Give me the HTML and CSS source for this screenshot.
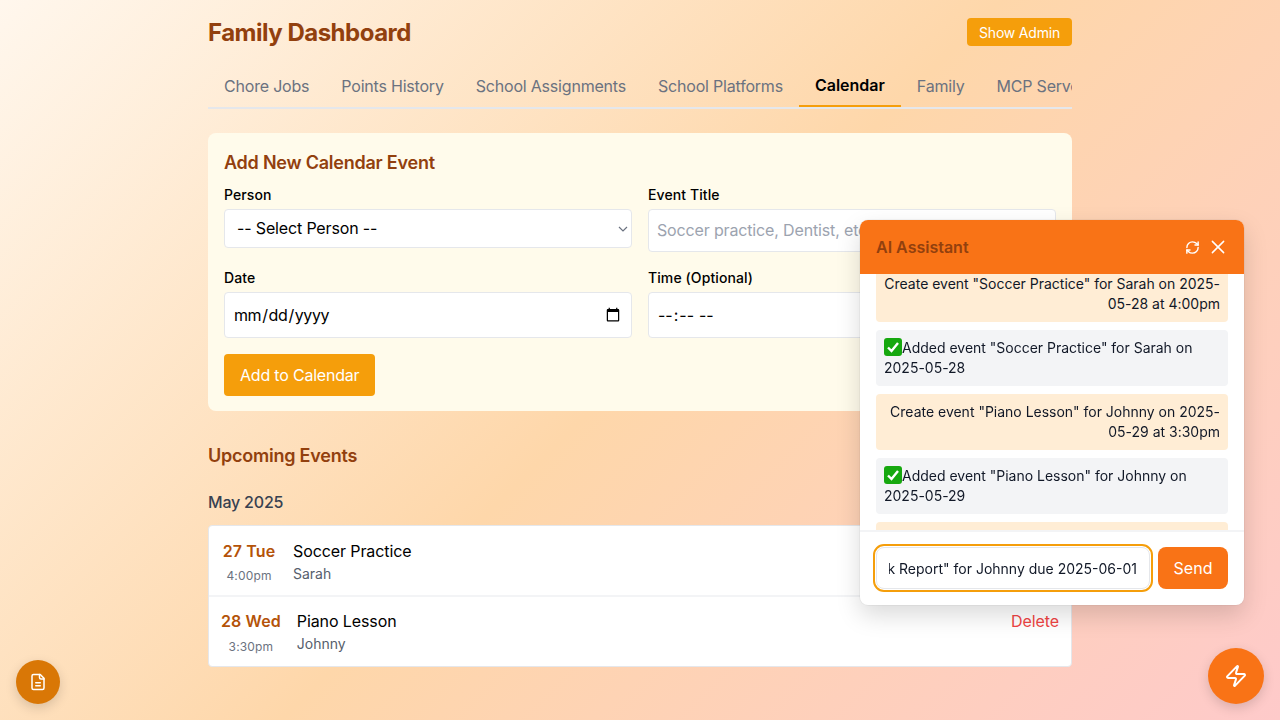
FILE: index.html

```html
<!DOCTYPE html>
<html lang="en">
<head>
<meta charset="UTF-8">
<title>Family Dashboard</title>
<meta name="viewport" content="width=device-width, initial-scale=1">
<link rel="stylesheet" href="styles.css">
</head>
<body>

<main class="page">
  <header class="top">
    <h1>Family Dashboard</h1>
    <button class="btn-admin">Show Admin</button>
  </header>

  <nav class="tabs">
    <a class="tab">Chore Jobs</a>
    <a class="tab">Points History</a>
    <a class="tab">School Assignments</a>
    <a class="tab">School Platforms</a>
    <a class="tab active">Calendar</a>
    <a class="tab">Family</a>
    <a class="tab">MCP Servers</a>
  </nav>

  <section class="form-card">
    <h3>Add New Calendar Event</h3>
    <div class="form-grid">
      <div class="field">
        <label>Person</label>
        <select class="control select-control">
          <option>-- Select Person --</option>
        </select>
      </div>
      <div class="field">
        <label>Event Title</label>
        <input class="control title-control" type="text" placeholder="Soccer practice, Dentist, etc.">
      </div>
      <div class="field">
        <label>Date</label>
        <input class="control date-control" type="date">
      </div>
      <div class="field">
        <label>Time (Optional)</label>
        <input class="control time-control" type="time">
      </div>
    </div>
    <button class="btn-add">Add to Calendar</button>
  </section>

  <h2 class="upcoming">Upcoming Events</h2>
  <h4 class="month">May 2025</h4>

  <div class="events">
    <div class="event">
      <div class="when">
        <div class="day">27 Tue</div>
        <div class="time">4:00pm</div>
      </div>
      <div class="what">
        <div class="name">Soccer Practice</div>
        <div class="who">Sarah</div>
      </div>
      <a class="delete">Delete</a>
    </div>
    <div class="event">
      <div class="when">
        <div class="day">28 Wed</div>
        <div class="time">3:30pm</div>
      </div>
      <div class="what">
        <div class="name">Piano Lesson</div>
        <div class="who">Johnny</div>
      </div>
      <a class="delete">Delete</a>
    </div>
  </div>
</main>

<aside class="chat">
  <div class="chat-head">
    <span class="chat-title">AI Assistant</span>
    <div class="chat-icons">
      <svg width="15" height="15" viewBox="0 0 24 24" fill="none" stroke="currentColor" stroke-width="2.3" stroke-linecap="round" stroke-linejoin="round"><path d="M3 12a9 9 0 0 1 9-9 9.75 9.75 0 0 1 6.74 2.74L21 8"/><path d="M21 3v5h-5"/><path d="M21 12a9 9 0 0 1-9 9 9.75 9.75 0 0 1-6.74-2.74L3 16"/><path d="M8 16H3v5"/></svg>
      <svg width="18" height="18" viewBox="0 0 24 24" fill="none" stroke="currentColor" stroke-width="2" stroke-linecap="round" stroke-linejoin="round"><path d="M4.5 4.5l15 15"/><path d="M19.5 4.5l-15 15"/></svg>
    </div>
  </div>
  <div class="messages">
    <div class="msg user first">Create event "Soccer Practice" for Sarah on 2025-05-28 at 4:00pm</div>
    <div class="msg bot"><svg class="check" viewBox="0 0 18 18"><rect width="18" height="18" rx="3" fill="#16a80f"/><path d="M4 9.5l3.5 3.5L14 5" fill="none" stroke="#fff" stroke-width="2.4"/></svg>Added event "Soccer Practice" for Sarah on 2025-05-28</div>
    <div class="msg user">Create event "Piano Lesson" for Johnny on 2025-05-29 at 3:30pm</div>
    <div class="msg bot"><svg class="check" viewBox="0 0 18 18"><rect width="18" height="18" rx="3" fill="#16a80f"/><path d="M4 9.5l3.5 3.5L14 5" fill="none" stroke="#fff" stroke-width="2.4"/></svg>Added event "Piano Lesson" for Johnny on 2025-05-29</div>
    <div class="msg user">Add assignment "Book Report" for Johnny due 2025-06-01</div>
  </div>
  <div class="chat-foot">
    <div class="chat-input"><div class="chat-text"><span>Add assignment "Book Report" for Johnny due 2025-06-01</span></div></div>
    <button class="btn-send">Send</button>
  </div>
</aside>

<button class="fab fab-notes">
  <svg width="18" height="18" viewBox="0 0 24 24" fill="none" stroke="currentColor" stroke-width="2" stroke-linecap="round" stroke-linejoin="round"><path d="M15 2H6a2 2 0 0 0-2 2v16a2 2 0 0 0 2 2h12a2 2 0 0 0 2-2V7Z"/><path d="M14 2v4a2 2 0 0 0 2 2h4"/><path d="M9 13h6"/><path d="M9 17h6"/></svg>
</button>
<button class="fab fab-chat">
  <svg width="24" height="24" viewBox="0 0 24 24" fill="none" stroke="currentColor" stroke-width="2" stroke-linecap="round" stroke-linejoin="round"><path d="M4 14a1 1 0 0 1-.78-1.63l9.9-10.2a.5.5 0 0 1 .86.46l-1.92 6.02A1 1 0 0 0 13 10h7a1 1 0 0 1 .78 1.63l-9.9 10.2a.5.5 0 0 1-.86-.46l1.92-6.02A1 1 0 0 0 11 14z"/></svg>
</button>

</body>
</html>
```

FILE: styles.css

```css
* { box-sizing: border-box; }
html, body { height: 100%; }
body { margin: 0; height: 720px; overflow: hidden; font-family: Inter, 'Liberation Sans', sans-serif; color: #000; background: linear-gradient(135deg, #fff7ed 0%, #fed7aa 50%, #fecaca 100%); }

.page { width: 864px; margin: 0 auto; padding-top: 16px; }

.top { display: flex; justify-content: space-between; align-items: flex-start; height: 34px; margin-bottom: 16px; }
.top h1 { margin: 0; font-size: 24px; line-height: 34px; font-weight: 700; letter-spacing: -.5px; color: #92400e; }
.btn-admin { margin-top: 2px; height: 28px; padding: 0 12px; border: none; border-radius: 4px; background: #f59e0b; color: #fff; font: 400 14px Inter, sans-serif; letter-spacing: -.2px; }

.tabs { display: flex; height: 43px; overflow: hidden; border-bottom: 2px solid #e5e7eb; }
.tab { flex: none; height: 41px; padding: 0 16px; line-height: 40px; font-size: 16px; letter-spacing: -.2px; color: #6b7280; }
.tab.active { color: #000; font-weight: 600; letter-spacing: 0; line-height: 38px; border-bottom: 2px solid #f59e0b; }

.form-card { margin-top: 24px; padding: 16px; height: 278px; background: #fffbeb; border-radius: 8px; }
.form-card h3 { margin: 0 0 8px; font-size: 18px; line-height: 28px; font-weight: 600; letter-spacing: -.23px; color: #92400e; }
.form-grid { display: grid; grid-template-columns: 1fr 1fr; column-gap: 16px; row-gap: 16px; }
.field label { display: block; font-size: 14px; line-height: 20px; font-weight: 500; letter-spacing: .1px; margin-bottom: 4px; }
.control { display: block; width: 100%; background: #fff; border: 1px solid #e5e7eb; border-radius: 4px; font: 400 16px Inter, sans-serif; color: #000; }
.select-control { height: 39px; padding: 0 8px 2px 12px; letter-spacing: -.15px; appearance: none; background: #fff url("data:image/svg+xml,%3Csvg xmlns='http://www.w3.org/2000/svg' width='10' height='6' viewBox='0 0 10 6'%3E%3Cpath d='M1 1l4 4 4-4' fill='none' stroke='%236b7280' stroke-width='1.2'/%3E%3C/svg%3E") no-repeat right 3px center; }
.title-control { height: 43px; padding: 0 8px 2px; letter-spacing: -.15px; }
.title-control::placeholder { color: #9ca3af; }
.date-control { height: 46px; padding: 0 8px; letter-spacing: -.4px; }
.time-control { height: 46px; padding: 0 8px; letter-spacing: .2px; }
.btn-add { margin-top: 16px; height: 42px; padding: 0 16px; border: none; border-radius: 4px; background: #f59e0b; color: #fff; font: 400 16px Inter, sans-serif; letter-spacing: -.2px; }

.upcoming { margin: 31px 0 0; font-size: 18px; line-height: 28px; font-weight: 600; letter-spacing: -.23px; color: #92400e; }
.month { margin: 20px 0 0; font-size: 16px; line-height: 24px; font-weight: 500; letter-spacing: -.2px; color: #374151; }

.events { margin-top: 11px; background: #fff; border: 1px solid #e5e7eb; border-radius: 4px; }
.event { display: flex; align-items: flex-start; gap: 16px; height: 71px; padding: 13px 12px 0; border-bottom: 2px solid #f3f4f6; }
.event:last-child { height: 69px; padding-top: 12px; border-bottom: none; }
.when { min-width: 56px; text-align: center; }
.day { font-size: 16px; line-height: 24px; font-weight: 600; letter-spacing: .1px; color: #b45309; }
.time { margin-top: 3px; font-size: 12px; line-height: 20px; letter-spacing: .15px; color: #6b7280; }
.event:last-child .time { margin-top: 4px; }
.what { flex: 1; }
.name { font-size: 16px; line-height: 24px; letter-spacing: -.1px; }
.who { margin-top: 1px; font-size: 14px; line-height: 20px; color: #565e6c; }
.delete { font-size: 16px; line-height: 24px; letter-spacing: -.1px; color: #ef4444; }

.chat { position: fixed; left: 860px; top: 220px; width: 384px; height: 385px; display: flex; flex-direction: column; background: #fff; border-radius: 8px; overflow: hidden; box-shadow: 0 0 0 1px rgba(0, 0, 0, .04), 0 10px 25px rgba(0, 0, 0, .15); }
.chat-head { flex: none; height: 54px; padding: 0 17px 0 16px; display: flex; align-items: center; justify-content: space-between; background: #f97316; }
.chat-title { font-size: 16px; font-weight: 600; color: #92400e; }
.chat-icons { display: flex; align-items: center; gap: 9px; color: #fff; }
.chat-icons svg { display: block; }
.messages { flex: none; height: 256px; padding: 0 16px; overflow: hidden; display: flex; flex-direction: column; gap: 8px; }
.msg { flex: none; padding: 8px; border-radius: 4px; font-size: 14px; line-height: 20px; letter-spacing: -.01px; color: #111827; }
.msg.first { margin-top: -8px; }
.msg.user { background: #ffedd5; text-align: right; }
.msg.bot { background: #f3f4f6; }
.check { display: inline-block; width: 18px; height: 18px; vertical-align: top; }
.chat-foot { flex: 1; display: flex; align-items: center; gap: 8px; padding: 0 16px 2px; border-top: 2px solid #f3f4f6; }
.chat-input { flex: 1; min-width: 0; height: 42px; display: flex; align-items: center; padding: 1px 12px 0; background: #fff; border: 1px solid #e5e7eb; border-radius: 8px; outline: 2px solid #f59e0b; outline-offset: 1px; font-size: 14px; color: #111827; }
.chat-text { flex: 1; min-width: 0; display: flex; justify-content: flex-end; overflow: hidden; white-space: nowrap; }
.chat-text span { flex: none; }
.btn-send { flex: none; width: 70px; height: 42px; border: none; border-radius: 8px; background: #f97316; color: #fff; font: 400 16px Inter, sans-serif; }

.fab { position: fixed; display: flex; align-items: center; justify-content: center; padding: 0; border: none; border-radius: 50%; color: #fff; box-shadow: 0 4px 12px rgba(0, 0, 0, .15); }
.fab-notes { left: 16px; top: 660px; width: 44px; height: 44px; background: #d97706; }
.fab-chat { left: 1208px; top: 648px; width: 56px; height: 56px; background: #f97316; }
```
